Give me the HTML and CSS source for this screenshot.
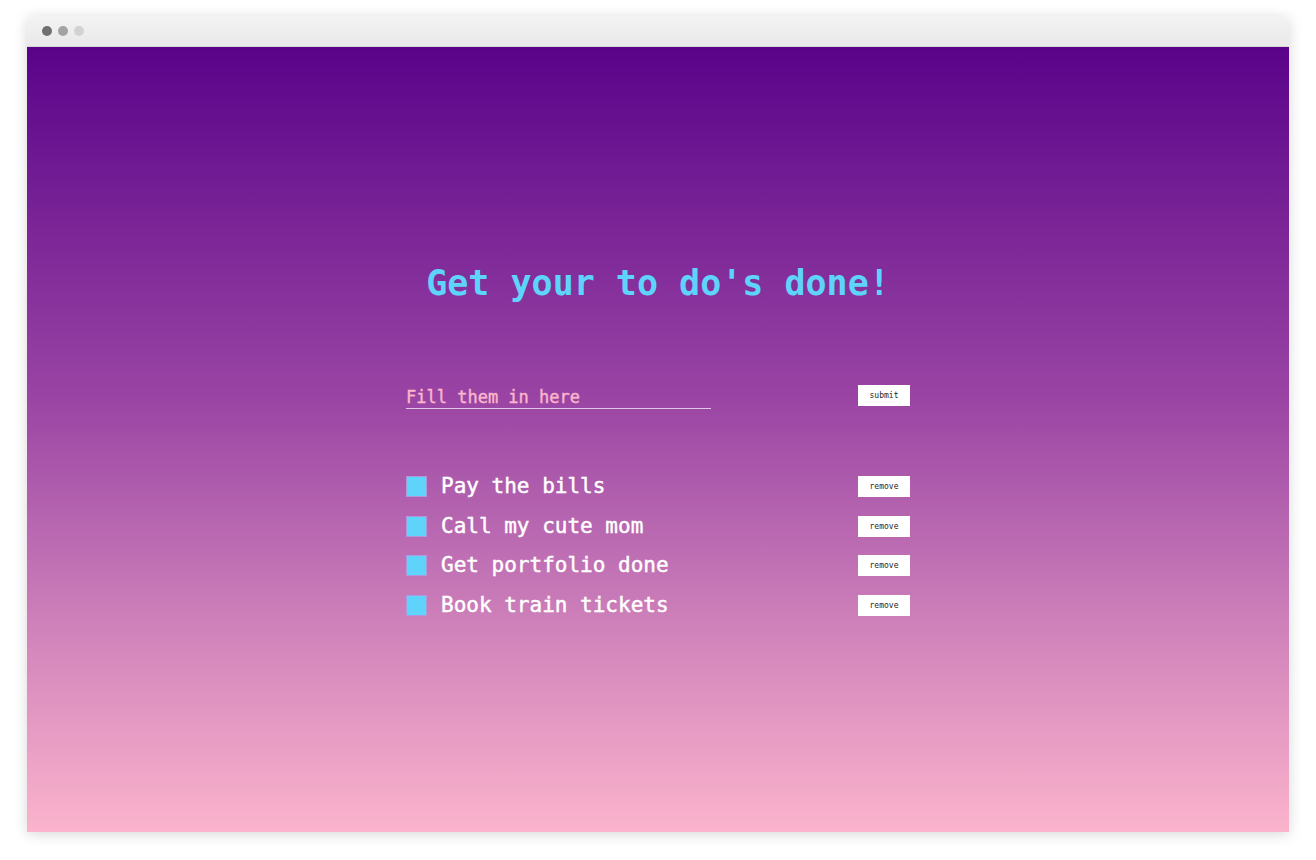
FILE: index.html
```html
<!DOCTYPE html>
<html>
<head>
<meta charset="utf-8">
<link rel="stylesheet" href="styles.css">
</head>
<body>
<div class="window">
  <div class="titlebar">
    <span class="dot d1"></span><span class="dot d2"></span><span class="dot d3"></span>
  </div>
  <div class="content">
    <h1 class="title">Get your to do's done!</h1>
    <form class="form">
      <input class="field" type="text" placeholder="Fill them in here">
      <button class="btn" type="button">submit</button>
    </form>
    <ul class="list">
      <li class="item"><span class="check"></span><span class="label">Pay the bills</span><button class="btn" type="button">remove</button></li>
      <li class="item"><span class="check"></span><span class="label">Call my cute mom</span><button class="btn" type="button">remove</button></li>
      <li class="item"><span class="check"></span><span class="label">Get portfolio done</span><button class="btn" type="button">remove</button></li>
      <li class="item"><span class="check"></span><span class="label">Book train tickets</span><button class="btn" type="button">remove</button></li>
    </ul>
  </div>
</div>
</body>
</html>
```

FILE: styles.css
```css
* { box-sizing: border-box; }
html, body { margin: 0; height: 100%; }
body {
  background: #ffffff;
  padding: 16px 27px 28px;
  font-family: "DejaVu Sans Mono", "Liberation Mono", monospace;
}
.window {
  height: 816px;
  display: flex;
  flex-direction: column;
  border-radius: 6px 6px 0 0;
  overflow: hidden;
  box-shadow: 0 2px 14px rgba(0,0,0,0.16);
}
.titlebar {
  height: 31px;
  flex: none;
  background: linear-gradient(#f3f3f3, #e9e9e9);
  border-bottom: 1px solid #d6d6d6;
  display: flex;
  align-items: center;
  padding-left: 15px;
  gap: 6px;
}
.dot { width: 10px; height: 10px; border-radius: 50%; }
.d1 { background: #707070; }
.d2 { background: #a3a3a3; }
.d3 { background: #d2d2d2; }
.content {
  flex: 1;
  background: linear-gradient(#5a038a 0%, #9a45a4 45%, #d184bb 75%, #fbb4cc 100%);
  display: flex;
  flex-direction: column;
  align-items: center;
  padding-top: 216px;
}
.title {
  margin: 0;
  font-size: 35px;
  line-height: 40px;
  font-weight: bold;
  color: #5fd4fb;
}
.form {
  width: 504px;
  margin: 82px 0 0;
  display: flex;
  justify-content: space-between;
  align-items: flex-start;
}
.field {
  width: 305px;
  height: 24px;
  padding: 0;
  border: none;
  border-bottom: 1px solid rgba(255,255,255,0.7);
  background: transparent;
  font-family: inherit;
  font-size: 17px;
  color: #fbb6cc;
  outline: none;
  -webkit-text-stroke: 0.4px #fbb6cc;
}
.field::placeholder { color: #fbb6cc; opacity: 1; -webkit-text-stroke: 0.4px #fbb6cc; }
.btn {
  width: 52px;
  height: 21px;
  padding: 0;
  border: none;
  background: #ffffff;
  font-family: "DejaVu Sans Mono", monospace;
  font-size: 8px;
  color: #1e1e1e;
}
.list {
  list-style: none;
  margin: 67px 0 0;
  padding: 0;
  width: 504px;
  display: flex;
  flex-direction: column;
  gap: 18.5px;
}
.item {
  display: flex;
  align-items: center;
  height: 21px;
}
.check {
  width: 21px;
  height: 21px;
  background: #5fd4fb;
  border: 1px solid rgba(230,110,200,0.6);
  margin-right: 14px;
}
.label {
  font-size: 21px;
  line-height: 23px;
  color: #ffffff;
  -webkit-text-stroke: 0.45px #ffffff;
}
.item .btn { margin-left: auto; }
```
